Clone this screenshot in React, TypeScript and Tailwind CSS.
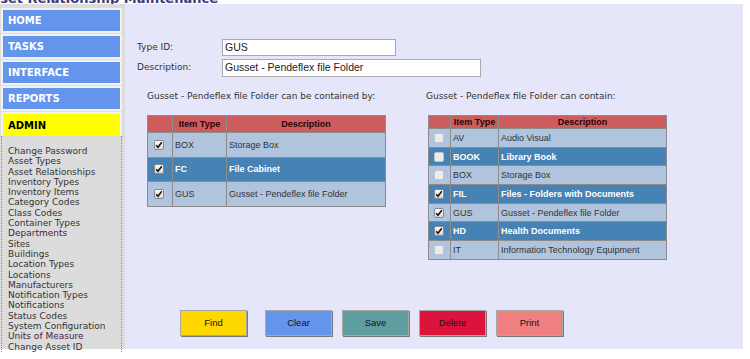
import React from "react";

const navItems = ["HOME", "TASKS", "INTERFACE", "REPORTS"];
const links = [
  "Change Password",
  "Asset Types",
  "Asset Relationships",
  "Inventory Types",
  "Inventory Items",
  "Category Codes",
  "Class Codes",
  "Container Types",
  "Departments",
  "Sites",
  "Buildings",
  "Location Types",
  "Locations",
  "Manufacturers",
  "Notification Types",
  "Notifications",
  "Status Codes",
  "System Configuration",
  "Units of Measure",
  "Change Asset ID",
];

type Row = { code: string; desc: string; checked: boolean; sel: boolean };

const leftRows: Row[] = [
  { code: "BOX", desc: "Storage Box", checked: true, sel: false },
  { code: "FC", desc: "File Cabinet", checked: true, sel: true },
  { code: "GUS", desc: "Gusset - Pendeflex file Folder", checked: true, sel: false },
];

const rightRows: Row[] = [
  { code: "AV", desc: "Audio Visual", checked: false, sel: false },
  { code: "BOOK", desc: "Library Book", checked: false, sel: true },
  { code: "BOX", desc: "Storage Box", checked: false, sel: false },
  { code: "FIL", desc: "Files - Folders with Documents", checked: true, sel: true },
  { code: "GUS", desc: "Gusset - Pendeflex file Folder", checked: true, sel: false },
  { code: "HD", desc: "Health Documents", checked: true, sel: true },
  { code: "IT", desc: "Information Technology Equipment", checked: false, sel: false },
];

const verdana = { fontFamily: '"DejaVu Sans", Verdana, sans-serif' };
const arial = { fontFamily: '"Liberation Sans", Arial, sans-serif' };

function Check({ checked }: { checked: boolean }) {
  return (
    <div
      className={
        "mx-auto w-[10px] h-[10px] rounded-[2px] border flex items-center justify-center " +
        (checked
          ? "border-[#8a8a8a] bg-gradient-to-b from-[#fbfbfb] to-[#d8d8d8]"
          : "border-[#c4c4c4] bg-[#ececec]")
      }
    >
      {checked && (
        <svg width="8" height="8" viewBox="0 0 8 8">
          <path d="M1.2 4.2 L3 6.3 L6.8 1.3" fill="none" stroke="#111" strokeWidth="1.5" />
        </svg>
      )}
    </div>
  );
}

function DataTable({
  rows,
  widths,
  headH,
  rowH,
}: {
  rows: Row[];
  widths: [number, number, number];
  headH: number;
  rowH: number;
}) {
  return (
    <table className="border-collapse border border-[#8c8c8c] text-[9px] leading-[10px]" style={arial}>
      <colgroup>
        <col style={{ width: widths[0] }} />
        <col style={{ width: widths[1] }} />
        <col style={{ width: widths[2] }} />
      </colgroup>
      <thead>
        <tr className="bg-[#cd5c5c] text-[#2a0505] font-bold" style={{ height: headH }}>
          <th className="border border-[#8c8c8c] p-0"></th>
          <th className="border border-[#8c8c8c] p-0 text-center">Item Type</th>
          <th className="border border-[#8c8c8c] p-0 text-center">Description</th>
        </tr>
      </thead>
      <tbody>
        {rows.map((r) => (
          <tr
            key={r.code}
            className={r.sel ? "bg-[#4682b4] text-white font-bold" : "bg-[#b0c4de] text-[#333333]"}
            style={{ height: rowH }}
          >
            <td className="border border-[#8c8c8c] p-0 pr-[2px]">
              <Check checked={r.checked} />
            </td>
            <td className="border border-[#8c8c8c] p-0 pl-[2px]">{r.code}</td>
            <td className="border border-[#8c8c8c] p-0 pl-[2px] whitespace-nowrap">{r.desc}</td>
          </tr>
        ))}
      </tbody>
    </table>
  );
}

function Btn({ label, cls }: { label: string; cls: string }) {
  return (
    <div
      className={
        "w-[67px] h-[26px] flex items-center justify-center border border-[#a8a8a8] shadow-[1px_1px_0_#7a7a7a] text-[9.5px] text-[#141414] " +
        cls
      }
      style={arial}
    >
      {label}
    </div>
  );
}

export default function App() {
  return (
    <div className="w-[750px] h-[359px] bg-white overflow-hidden">
      <div className="h-[4px] w-[218px] overflow-hidden flex justify-end items-end">
        <span
          className="whitespace-nowrap text-[13px] leading-[13px] font-bold text-[#3a3a7a] translate-y-[1px]"
          style={verdana}
        >
          Asset Relationship Maintenance
        </span>
      </div>
      <div className="flex h-[345px]">
        <div className="w-[125px] bg-[#dcdcdc] flex flex-col">
          <div className="pt-[4px] flex flex-col gap-[1px] pr-[3px] pl-[1px]">
            {navItems.map((n) => (
              <div key={n} className="bg-[#f2f2f2] p-[2px] h-[25px]">
                <div
                  className="h-full bg-[#6495ed] text-white font-bold text-[10px] flex items-center pl-[5px]"
                  style={verdana}
                >
                  {n}
                </div>
              </div>
            ))}
            <div className="bg-[#f2f2f2] p-[2px] pb-0 h-[24px]">
              <div
                className="h-full bg-[#ffff00] text-black font-bold text-[10px] flex items-center pl-[5px]"
                style={verdana}
              >
                ADMIN
              </div>
            </div>
          </div>
          <div className="flex-1 ml-[1px] mr-[3px] border-l border-r border-dotted border-[#8a8a8a] pl-[6px] pt-[10px]">
            {links.map((l) => (
              <div
                key={l}
                className={
                  "text-[9px] leading-[10.3px] whitespace-nowrap " +
                  (l === "Departments" || l === "Units of Measure" ? "text-[#4a2040]" : "text-[#333333]")
                }
                style={verdana}
              >
                {l}
              </div>
            ))}
          </div>
        </div>

        <div className="w-[618px] bg-[#e6e6fa] flex flex-col">
          <div className="pl-[12px] pt-[35px]">
            <div className="flex items-center h-[17px]">
              <div className="w-[85px] text-[9px] text-[#333333]" style={verdana}>
                Type ID:
              </div>
              <div
                className="w-[174px] h-[17px] bg-white border border-[#a9a9a9] pl-[2px] text-[10.5px] text-[#222] flex items-center"
                style={arial}
              >
                GUS
              </div>
            </div>
            <div className="flex items-center h-[18px] mt-[3px]">
              <div className="w-[85px] text-[9px] text-[#333333]" style={verdana}>
                Description:
              </div>
              <div
                className="w-[259px] h-[18px] bg-white border border-[#a9a9a9] pl-[2px] text-[10.5px] text-[#222] flex items-center"
                style={arial}
              >
                Gusset - Pendeflex file Folder
              </div>
            </div>
          </div>

          <div className="flex mt-[14px]">
            <div className="ml-[22px] w-[279px]">
              <div className="h-[10px] leading-[10px] text-[9px] text-[#333333] whitespace-nowrap" style={verdana}>
                Gusset - Pendeflex file Folder can be contained by:
              </div>
              <div className="mt-[14px]">
                <DataTable rows={leftRows} widths={[25, 54, 159]} headH={17} rowH={24.5} />
              </div>
            </div>
            <div className="w-[300px]">
              <div className="h-[10px] leading-[10px] text-[9px] text-[#333333] whitespace-nowrap" style={verdana}>
                Gusset - Pendeflex file Folder can contain:
              </div>
              <div className="mt-[14px] ml-[2px]">
                <DataTable rows={rightRows} widths={[22, 48, 168]} headH={13} rowH={18.7} />
              </div>
            </div>
          </div>

          <div className="flex ml-[55px] mt-[50px] gap-[10px]">
            <Btn label="Find" cls="bg-[#ffd700] mr-[8px]" />
            <Btn label="Clear" cls="bg-[#6495ed]" />
            <Btn label="Save" cls="bg-[#5f9ea0]" />
            <Btn label="Delete" cls="bg-[#dc143c]" />
            <Btn label="Print" cls="bg-[#f08080]" />
          </div>
        </div>
      </div>
    </div>
  );
}
